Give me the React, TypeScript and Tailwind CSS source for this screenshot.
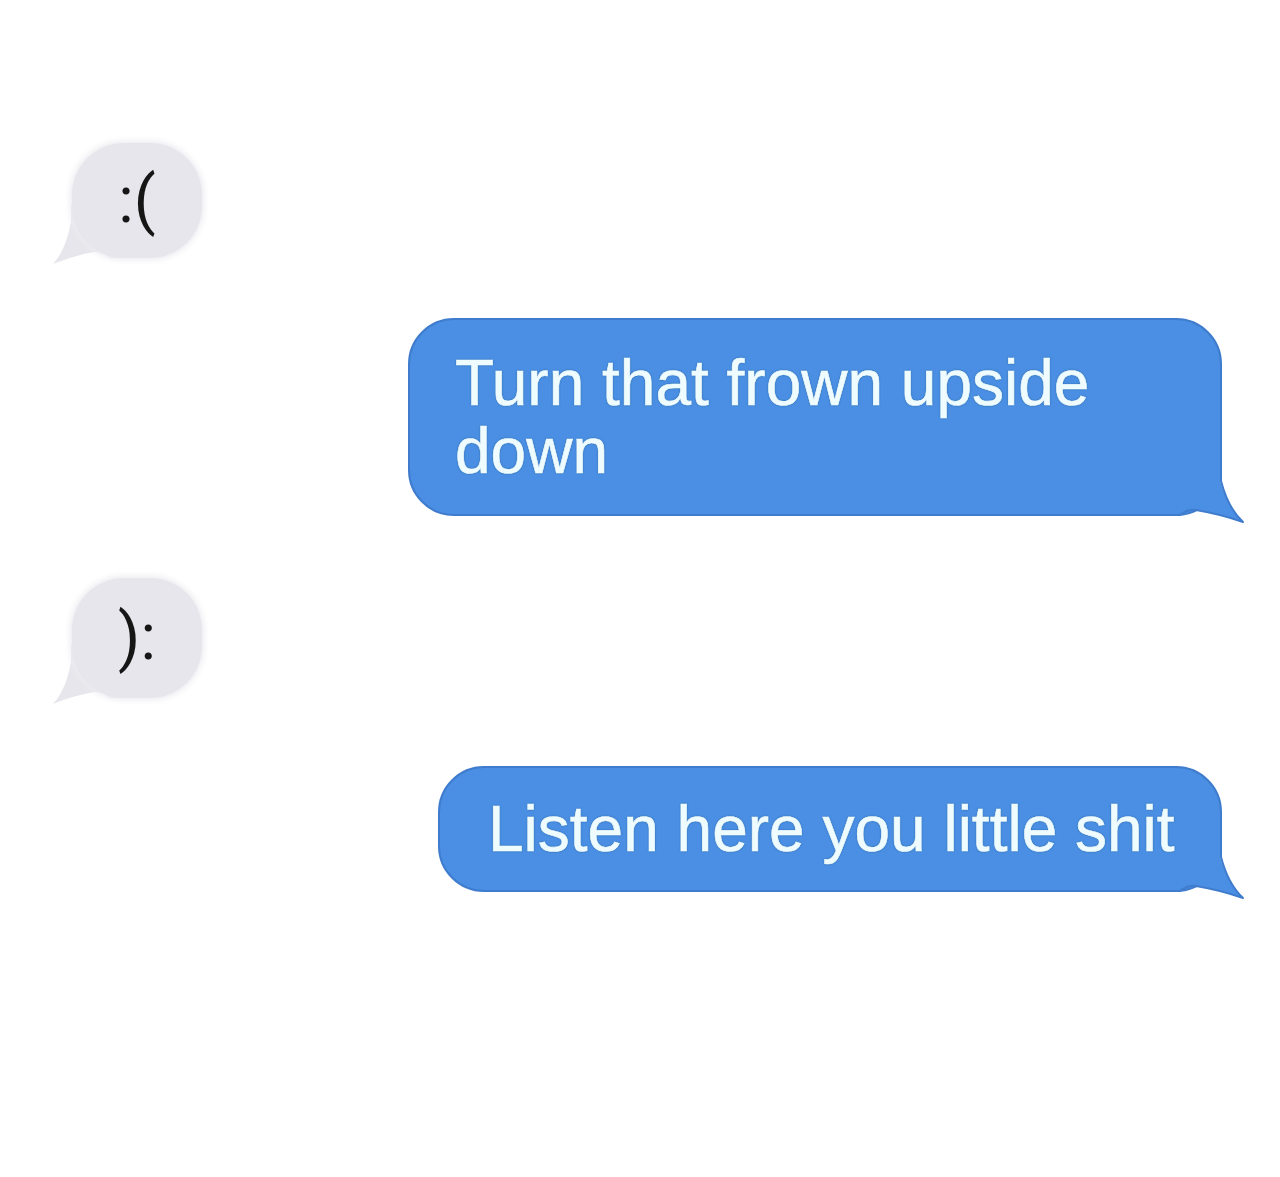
const font = { fontFamily: '"Liberation Sans", Arial, sans-serif' };
const smileyFont = { fontFamily: 'Roboto, "Liberation Sans", sans-serif' };

// grey incoming bubble, tail at bottom-left
const GreyBubble = ({ text, className }: { text: string; className: string }) => {
  return (
    <div className={`relative ml-[72px] w-[130px] ${className}`}>
      <svg
        className="absolute -left-[20px] -bottom-[8px]"
        width="70"
        height="62"
        viewBox="0 0 70 62"
      >
        <path
          d="M70 54 L58 54 Q50 47 42 48 Q20 52 1 60 Q14 46 19 18 L19 0 L70 0 Z"
          fill="#e6e6ec"
        />
      </svg>
      <div className="relative flex h-full w-full items-center justify-center rounded-[52px] bg-[#e6e6ec] shadow-[0_0_6px_2px_#ececf1]">
        <span className="text-[64px] font-normal leading-none text-[#161616]" style={smileyFont}>
          {text}
        </span>
      </div>
    </div>
  );
};

// blue outgoing bubble, tail at bottom-right
const BlueBubble = ({
  children,
  className,
}: {
  children: React.ReactNode;
  className: string;
}) => {
  return (
    <div className={`relative mr-[58px] self-end ${className}`}>
      <div className="rounded-[46px] border-2 border-[#3f7ccd] bg-[#4a8fe3]">
        <p
          className="relative z-10 text-[64px] leading-[68px] text-[#effcff] [-webkit-text-stroke:0.6px_#effcff] [text-shadow:0_0_2px_rgba(10,60,90,0.7)]"
          style={font}
        >
          {children}
        </p>
      </div>
      <svg
        className="absolute -right-[22px] -bottom-[7px]"
        width="76"
        height="62"
        viewBox="0 0 76 62"
      >
        <path
          d="M0 53 L12 53 Q20 47 28 48 Q52 53 75 61 Q60 47 52 20 L52 0 L0 0 Z"
          fill="#4a8fe3"
        />
        <path
          d="M0 54 L12 54 Q20 48 28 49 Q52 53 75 61 Q60 47 53 20 L53 0"
          fill="none"
          stroke="#3f7ccd"
          strokeWidth="2"
          strokeLinejoin="round"
        />
      </svg>
    </div>
  );
};

export default function App() {
  return (
    <div className="flex min-h-[1177px] w-full flex-col bg-white">
      <GreyBubble text=":(" className="mt-[143px] h-[115px]" />

      <BlueBubble className="mt-[60px] w-[814px] [&>div]:pt-[29px] [&>div]:pb-[29px] [&>div]:pl-[45px]">
        Turn that frown upside
        <br />
        down
      </BlueBubble>

      <GreyBubble text="):" className="mt-[62px] h-[120px]" />

      <BlueBubble className="mt-[68px] w-[784px] [&>div]:py-[27px] [&>div]:pl-[48px]">
        Listen here you little shit
      </BlueBubble>
    </div>
  );
}
